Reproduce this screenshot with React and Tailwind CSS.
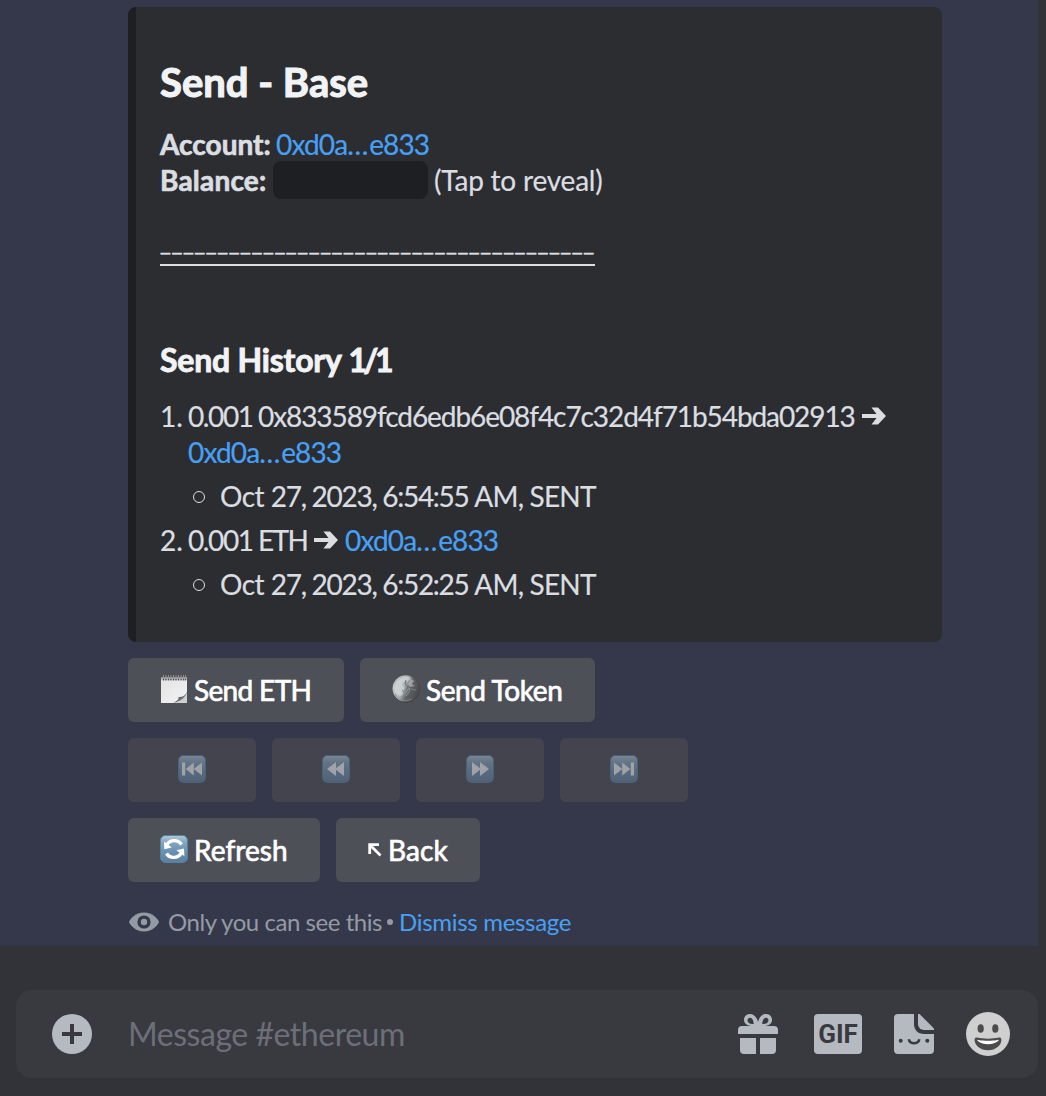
import React from "react";

function AddressLink() {
  return (
    <a className="whitespace-nowrap text-[#48a0f4] [-webkit-text-stroke:0.2px_#48a0f4]">
      <span className="tracking-[-0.85px]">0xd0a</span>
      <span className="tracking-[0.7px]">...</span>
      <span className="tracking-[-0.85px]">e833</span>
    </a>
  );
}

function NotepadIcon() {
  return (
    <svg width="28" height="30" viewBox="0 0 28 30" className="shrink-0">
      <defs>
        <linearGradient id="paper" x1="0" y1="0" x2="1" y2="1">
          <stop offset="0" stopColor="#e3e3e3" />
          <stop offset="1" stopColor="#f3f3f3" />
        </linearGradient>
        <linearGradient id="curl" x1="0" y1="0" x2="1" y2="1">
          <stop offset="0" stopColor="#e5e5e5" />
          <stop offset="0.450" stopColor="#56585b" />
          <stop offset="1" stopColor="#b5b6b8" />
        </linearGradient>
      </defs>
      <rect x="1" y="3.500" width="26" height="25.500" fill="url(#paper)" />
      <path d="M1 4h26v1.500H1z" fill="#a9aaac" />
      <path d="M14 29C19 27 25 24 27 18.500V29Z" fill="#cfd0d1" />
      <path d="M13 28.800C17 27 19 25.500 18.500 23C22 23.500 25.500 21.500 27 17.500C26 23.500 21 27.500 13 28.800Z" fill="url(#curl)" />
      <path d="M3.500 1v4.500M6 1v4.500M8.500 1v4.500M11 1v4.500M13.500 1v4.500M16 1v4.500M18.500 1v4.500M21 1v4.500M23.500 1v4.500M25.500 1v4.500" stroke="#8d8f93" strokeWidth="1" />
      <path d="M3.500 5v1.500M6 5v1.500M8.500 5v1.500M11 5v1.500M13.500 5v1.500M16 5v1.500M18.500 5v1.500M21 5v1.500M23.500 5v1.500M25.500 5v1.500" stroke="#4c4d50" strokeWidth="1.300" />
    </svg>
  );
}

function CoinIcon() {
  return (
    <svg width="28" height="28" viewBox="0 0 28 28" className="shrink-0">
      <defs>
        <linearGradient id="coin" x1="0" y1="0.300" x2="1" y2="0.700">
          <stop offset="0" stopColor="#c3c8ca" />
          <stop offset="0.400" stopColor="#b0b5b7" />
          <stop offset="0.620" stopColor="#5f6264" />
          <stop offset="1" stopColor="#48494b" />
        </linearGradient>
      </defs>
      <circle cx="14" cy="14" r="13.700" fill="#3e3f42" />
      <circle cx="13.800" cy="13.600" r="13.300" fill="url(#coin)" />
      <path d="M5 7C8 3 12 1.500 17 2L19 4L15 7L12 6L10 10L13 13L10 16L12 19L8 21L4 19L2 13Z" fill="#dde1e2" opacity="0.550" />
      <path d="M19 4L22 6L20 9L23 11L18 12L16 9Z" fill="#c9cdce" opacity="0.550" />
      <path d="M10 15L12 17L11 20L14 18L16 14L18 13L17 17L14 21" fill="none" stroke="#8d9193" strokeWidth="1" />
      <path d="M14 5L13 9L16 12L14 15" fill="none" stroke="#6d7173" strokeWidth="1" />
      <path d="M19 14L24 15M3 19C6 25 13 27 20 24" fill="none" stroke="#85888a" strokeWidth="0.800" />
    </svg>
  );
}

function BlueTile({ children }) {
  return (
    <svg width="28" height="28" viewBox="0 0 28 28" className="shrink-0">
      <defs>
        <linearGradient id="tile" x1="0" y1="0" x2="0" y2="1">
          <stop offset="0" stopColor="#b4cad8" />
          <stop offset="0.250" stopColor="#83a6c2" />
          <stop offset="0.550" stopColor="#6d94b5" />
          <stop offset="1" stopColor="#5b7f9d" />
        </linearGradient>
      </defs>
      <rect x="0.500" y="0.500" width="27" height="27" rx="5" fill="url(#tile)" stroke="#5482a5" strokeWidth="1" />
      {children}
    </svg>
  );
}

function RefreshIcon() {
  return (
    <BlueTile>
      <path d="M6.300 10.800A8.700 8.700 0 0 1 21.500 9.500M21.700 17.200A8.700 8.700 0 0 1 6.500 18.500" fill="none" stroke="#fff" strokeWidth="3.400" />
      <path d="M4 6.500L4.300 14.300L11.800 12.600ZM24.400 21.300L24 13.500L16.500 15.300Z" fill="#fff" />
    </BlueTile>
  );
}

const TRANSPORT = {
  first: "M4 7.500h3.200v13H4zM15.800 7.500v13L7.700 14zM24 7.500v13L15.800 14z",
  back: "M14 7v14L5 14zM22 7v14L13 14z",
  forward: "M14 7v14l9-7zM6 7v14l9-7z",
  last: "M24 7.500h-3.200v13H24zM12.200 7.500v13l8.100-6.500zM4 7.500v13l8.200-6.500z",
};

function NavButton({ kind }) {
  return (
    <button className="flex h-16 w-32 justify-center rounded-md bg-[#43444e] pt-[17px]">
      <span className="h-7 opacity-50">
        <BlueTile>
          <path d={TRANSPORT[kind]} fill="#fff" />
        </BlueTile>
      </span>
    </button>
  );
}

function Button({ width, icon, label, tracking }) {
  return (
    <button className={`flex h-16 items-center gap-[6px] rounded-md bg-[#4e5058] pl-8 text-left text-[28px] text-white ${width}`}>
      {icon}
      <span className={`whitespace-nowrap pb-px [-webkit-text-stroke:0.7px_white] ${tracking}`}>{label}</span>
    </button>
  );
}

function Arrow() {
  return (
    <svg width="26" height="20" viewBox="0 0 26 20">
      <path d="M1 8h14.500L10.500 1.500h6.500L25 10L17 18.500h-6.500L15.500 12H1z" fill="#dbdee1" />
    </svg>
  );
}

function SubItem({ time }) {
  return (
    <div className="mt-2 flex h-9 items-center leading-9">
      <span className="ml-[5px] mr-[15px] mt-px h-3 w-3 rounded-full border-[1.500px] border-[#dbdee1]" />
      <span className="whitespace-pre">
        <span className="tracking-[-0.5px]">Oct </span>
        <span className="tracking-[-1.3px]">27, 2023, {time} </span>
        <span className="tracking-[-0.8px]">AM, SENT</span>
      </span>
    </div>
  );
}

function Embed() {
  return (
    <article className="h-[635px] w-[814px] rounded-lg border-l-8 border-[#1e1f22] bg-[#2b2d31] pl-6 text-[28px] leading-9 text-[#dbdee1] [-webkit-text-stroke:0.2px_#dbdee1]">
      <h1 className="pt-[50px] text-[40px] font-bold leading-[50px] text-[#f2f3f5] [-webkit-text-stroke:1.1px_#f2f3f5]">Send - Base</h1>
      <div className="mt-[19px] flex h-9 items-center whitespace-pre">
        <b className="w-[116px] [-webkit-text-stroke:0.7px_#dbdee1]">Account:</b>
        <AddressLink />
      </div>
      <div className="flex h-9 items-center">
        <b className="w-[113px] tracking-[0.2px] [-webkit-text-stroke:0.7px_#dbdee1]">Balance:</b>
        <span className="h-[38px] w-[155px] shrink-0 rounded-lg bg-[#1e1f22]" />
        <span className="ml-[6px] tracking-[-0.2px]">(Tap to reveal)</span>
      </div>
      <div className="mt-9 flex h-8 w-[435px] items-end overflow-hidden border-b-2 border-[#dbdee1] pb-[8px] pl-px font-['Liberation_Sans'] text-[16px] leading-[20px] tracking-[2.540px] [-webkit-text-stroke:0.6px_#dbdee1]">
        {"_".repeat(38)}
      </div>
      <h2 className="mt-[74px] whitespace-pre text-[32px] font-bold leading-10 text-[#f2f3f5] [-webkit-text-stroke:0.9px_#f2f3f5]">
        <span className="tracking-[-0.2px]">Send History </span>
        <span className="tracking-[-3.5px]">1/1</span>
      </h2>
      <div className="mt-[18px] flex">
        <span className="w-7">1.</span>
        <div>
          <div className="flex h-9 items-center whitespace-nowrap">
            <span className="w-[70px] tracking-[-1.4px]">0.001</span>
            <span className="mr-[6px] tracking-[-1.080px]">0x833589fcd6edb6e08f4c7c32d4f71b54bda02913</span>
            <Arrow />
          </div>
          <div className="h-9">
            <AddressLink />
          </div>
          <SubItem time="6:54:55" />
        </div>
      </div>
      <div className="mt-2 flex">
        <span className="w-7">2.</span>
        <div>
          <div className="flex h-9 items-center whitespace-nowrap">
            <span className="w-[70px] tracking-[-1.4px]">0.001</span>
            <span className="w-[55px] tracking-[-1.6px]">ETH</span>
            <Arrow />
            <span className="ml-[6px]">
              <AddressLink />
            </span>
          </div>
          <SubItem time="6:52:25" />
        </div>
      </div>
    </article>
  );
}

function GiftIcon() {
  return (
    <svg width="40" height="40" viewBox="0 0 40 40">
      <path d="M20 12.500C17 12.500 6 13 6 6C6 2.500 8.500 0 12 0C16.500 0 19 4 20 8C21 4 23.500 0 28 0C31.500 0 34 2.500 34 6C34 13 23 12.500 20 12.500Z" fill="#b5bac1" />
      <path d="M15.800 10C12 10.500 9.500 8.500 9.500 6.200C9.500 4.700 10.700 3.700 12 3.700C14.500 3.700 15.600 7 15.800 10ZM24.200 10C28 10.500 30.500 8.500 30.500 6.200C30.500 4.700 29.300 3.700 28 3.700C25.500 3.700 24.400 7 24.200 10Z" fill="#383a40" />
      <path d="M4 12h32a4 4 0 0 1 4 4v4H0v-4a4 4 0 0 1 4-4ZM2 24h16v16H6a4 4 0 0 1-4-4ZM22 24h16v12a4 4 0 0 1-4 4H22Z" fill="#b5bac1" />
    </svg>
  );
}

function StickerIcon() {
  return (
    <svg width="40" height="40" viewBox="0 0 40 40">
      <path d="M4 0h16v10c0 6 4 10 10 10h10v16a4 4 0 0 1-4 4H4a4 4 0 0 1-4-4V4a4 4 0 0 1 4-4Z" fill="#b5bac1" />
      <path d="M24 0h1.500L40 14.500V16H30a6 6 0 0 1-6-6Z" fill="#b5bac1" />
      <circle cx="6.700" cy="26.800" r="2" fill="#383a40" />
      <circle cx="33.300" cy="26.800" r="2" fill="#383a40" />
      <path d="M14.800 25.200a5.300 4.700 0 0 0 10.500 0" fill="none" stroke="#383a40" strokeWidth="2.600" />
    </svg>
  );
}

function SmileyIcon() {
  return (
    <svg width="44" height="44" viewBox="0 0 44 44">
      <circle cx="22" cy="22" r="22" fill="#cfcfcf" />
      <ellipse cx="14.700" cy="16.500" rx="3.100" ry="4.300" fill="#4b4b4b" />
      <ellipse cx="29.300" cy="16.500" rx="3.100" ry="4.300" fill="#4b4b4b" />
      <path d="M22 26.800c-4.400 0-7.300-.5-11-1.200-.8-.2-2.400 0-2.400 2.400 0 4.900 5.600 10.300 13.400 10.300S35.400 32.900 35.400 28c0-2.400-1.600-2.600-2.400-2.400-3.700.7-6.600 1.200-11 1.200Z" fill="#4b4b4b" />
      <path d="M11 27.800s3.700 1 11 1S33 27.800 33 27.800s-2.400 4.500-11 4.500S11 27.800 11 27.800Z" fill="#fff" />
    </svg>
  );
}

function Composer() {
  return (
    <footer className="h-[150px] bg-[#313338] pl-4 pt-11">
      <div className="flex h-[88px] w-[1022px] items-center rounded-2xl bg-[#383a40] pl-9">
        <svg width="40" height="40" viewBox="0 0 40 40">
          <circle cx="20" cy="20" r="20" fill="#b5bac1" />
          <path d="M18 10h4v8h8v4h-8v8h-4v-8h-8v-4h8z" fill="#383a40" />
        </svg>
        <span className="ml-[36px] w-[610px] text-[32px] tracking-[-0.47px] text-[#6d6f78]">Message #ethereum</span>
        <GiftIcon />
        <span className="ml-9 flex h-10 w-12 items-center justify-center rounded-[4px] bg-[#b5bac1] font-['Roboto'] text-[26px] font-bold text-[#383a40]">GIF</span>
        <span className="ml-8">
          <StickerIcon />
        </span>
        <span className="ml-8">
          <SmileyIcon />
        </span>
      </div>
    </footer>
  );
}

export default function App() {
  return (
    <div className="h-[1096px] w-[1046px] overflow-hidden bg-[#313338] font-['Lato','Noto_Sans',sans-serif]">
      <main className="h-[946px] w-[1038px] bg-[#35384a] pl-32 pt-[7px]">
        <Embed />
        <div className="mt-4 flex gap-4">
          <Button width="w-[216px]" icon={<span className="-mt-[2px]"><NotepadIcon /></span>} label="Send ETH" tracking="tracking-[-0.65px]" />
          <Button width="w-[235px]" icon={<span className="-mt-[2px]"><CoinIcon /></span>} label="Send Token" tracking="tracking-[-0.4px]" />
        </div>
        <div className="mt-4 flex gap-4">
          <NavButton kind="first" />
          <NavButton kind="back" />
          <NavButton kind="forward" />
          <NavButton kind="last" />
        </div>
        <div className="mt-4 flex gap-4">
          <Button width="w-48" icon={<span className="-mt-[2px]"><RefreshIcon /></span>} label="Refresh" tracking="tracking-[0.05px]" />
          <Button
            width="w-36"
            icon={
              <svg width="14" height="14" viewBox="0 0 14 14">
                <path d="M1.700 11V1.700H11M2 2L12.500 12.500" fill="none" stroke="#fff" strokeWidth="2.800" />
              </svg>
            }
            label="Back"
            tracking="tracking-[0.1px]"
          />
        </div>
        <div className="mt-[22px] flex h-9 items-center text-[24px] text-[#949ba4]">
          <svg width="32" height="32" viewBox="0 0 32 32">
            <path d="M16 6.500C7.500 6.500 2.500 12.500 1 16C2.500 19.500 7.500 25.500 16 25.500S29.500 19.500 31 16C29.500 12.500 24.500 6.500 16 6.500Z" fill="#949ba4" />
            <circle cx="16" cy="16" r="6.600" fill="#35384a" />
            <circle cx="16" cy="16" r="3.200" fill="#949ba4" />
          </svg>
          <span className="ml-2 w-[219px] whitespace-nowrap pb-px tracking-[-0.45px]">Only you can see this</span>
          <span className="mr-[6px] h-[6px] w-[6px] rounded-full bg-[#949ba4]" />
          <a className="pb-px tracking-[-0.3px] text-[#48a0f4]">Dismiss message</a>
        </div>
      </main>
      <Composer />
    </div>
  );
}
